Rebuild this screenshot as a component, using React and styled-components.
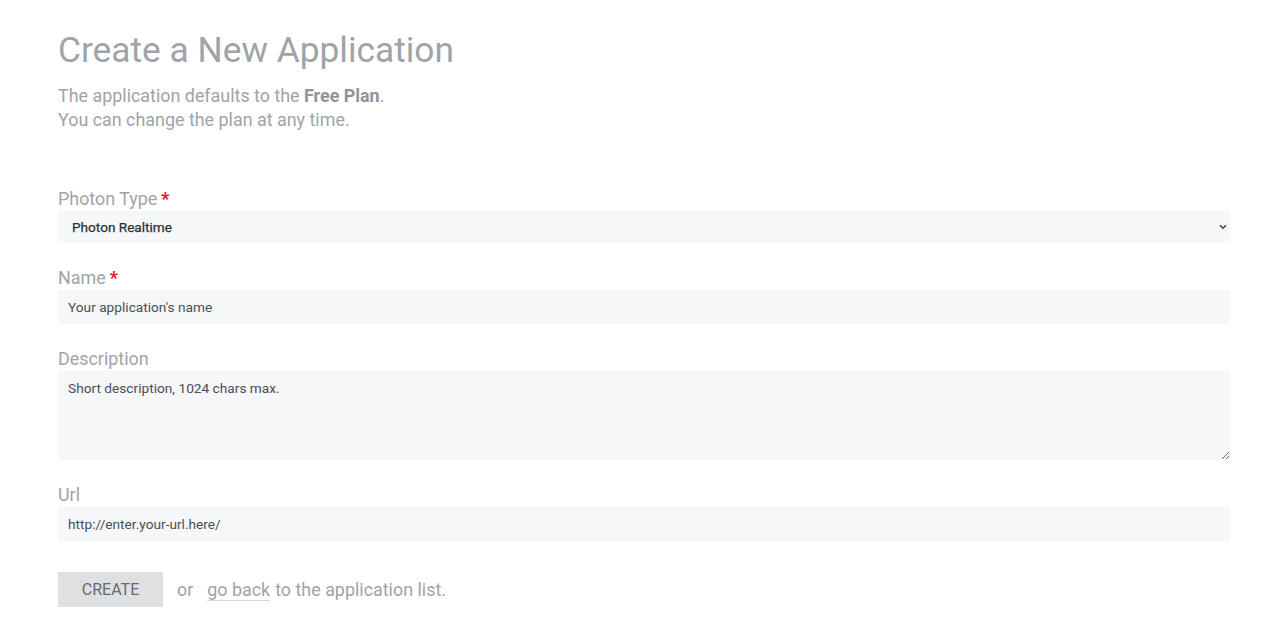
import React from 'react';
import styled, { createGlobalStyle } from 'styled-components';

const GlobalStyle = createGlobalStyle`
  html, body {
    margin: 0;
    padding: 0;
    background: #ffffff;
  }
  body {
    font-family: Roboto, 'Liberation Sans', sans-serif;
  }
`;

const Page = styled.div`
  padding: 26px 50px 30px 58px;
  box-sizing: border-box;
  width: 1280px;
`;

const Title = styled.h1`
  margin: 0;
  font-size: 35.3px;
  font-weight: 400;
  line-height: 48px;
  color: #a0a3a7;
`;

const Lead = styled.p`
  margin: 10px 0 0;
  font-size: 17.9px;
  line-height: 24px;
  color: #a0a3a7;

  strong {
    color: #909397;
    font-weight: 700;
  }
`;

const Form = styled.form`
  display: flex;
  flex-direction: column;
  gap: 25px;
  margin-top: 57px;
`;

const Field = styled.div`
  display: flex;
  flex-direction: column;
  gap: 2px;
`;

const Label = styled.label`
  font-size: 17.9px;
  line-height: 20px;
  color: #a0a3a7;
`;

const Required = styled.span`
  color: #e8112d;
  font-weight: 700;
  margin-left: 4px;
`;

const SelectWrap = styled.div`
  position: relative;
  display: flex;
  flex-direction: column;
`;

const Select = styled.select`
  appearance: none;
  height: 32px;
  border: none;
  outline: none;
  background: #f6f7f9;
  padding: 0 14px;
  font-family: Roboto, 'Liberation Sans', sans-serif;
  font-size: 13.6px;
  font-weight: 400;
  color: #2c2f34;
  -webkit-text-stroke: 0.25px #2c2f34;
`;

const Chevron = styled.svg`
  position: absolute;
  right: 3px;
  top: 13px;
  width: 8px;
  height: 6px;
  pointer-events: none;
`;

const Input = styled.input`
  height: 34px;
  border: none;
  outline: none;
  background: #f6f7f9;
  padding: 0 10px;
  font-family: Roboto, 'Liberation Sans', sans-serif;
  font-size: 13.7px;
  color: #4a4e54;

  &::placeholder {
    color: #4a4e54;
  }
`;

const TextArea = styled.textarea`
  height: 89px;
  box-sizing: border-box;
  border: none;
  outline: none;
  background: #f6f7f9;
  padding: 9px 10px;
  font-family: Roboto, 'Liberation Sans', sans-serif;
  font-size: 13.7px;
  color: #4a4e54;
  resize: vertical;

  &::placeholder {
    color: #4a4e54;
  }
`;

const Actions = styled.div`
  display: flex;
  align-items: center;
  margin-top: 6px;
  font-size: 17.9px;
  color: #a0a3a7;
`;

const Button = styled.button`
  width: 105px;
  height: 35px;
  border: none;
  background: #dfe0e2;
  color: #66696e;
  font-family: Roboto, 'Liberation Sans', sans-serif;
  font-size: 16px;
  text-transform: uppercase;
  cursor: pointer;
`;

const Or = styled.span`
  margin: 0 14px;
`;

const BackLink = styled.a`
  color: #a0a3a7;
  text-decoration: none;
  border-bottom: 1px solid #d6d8db;
  margin-right: 5px;
`;

const App = () => (
  <>
    <GlobalStyle />
    <Page>
      <Title>Create a New Application</Title>
      <Lead>
        The application defaults to the <strong>Free Plan</strong>.
        <br />
        You can change the plan at any time.
      </Lead>
      <Form onSubmit={(e) => e.preventDefault()}>
        <Field>
          <Label>
            Photon Type<Required>*</Required>
          </Label>
          <SelectWrap>
            <Select defaultValue="realtime">
              <option value="realtime">Photon Realtime</option>
              <option value="chat">Photon Chat</option>
              <option value="voice">Photon Voice</option>
            </Select>
            <Chevron viewBox="0 0 8 6">
              <path d="M1 1.2 L4 4.2 L7 1.2" fill="none" stroke="#444" strokeWidth="1.6" />
            </Chevron>
          </SelectWrap>
        </Field>
        <Field>
          <Label>
            Name<Required>*</Required>
          </Label>
          <Input placeholder="Your application's name" />
        </Field>
        <Field>
          <Label>Description</Label>
          <TextArea placeholder="Short description, 1024 chars max." />
        </Field>
        <Field>
          <Label>Url</Label>
          <Input placeholder="http://enter.your-url.here/" />
        </Field>
        <Actions>
          <Button type="submit">Create</Button>
          <Or>or</Or>
          <BackLink href="#">go back</BackLink>
          to the application list.
        </Actions>
      </Form>
    </Page>
  </>
);

export default App;
